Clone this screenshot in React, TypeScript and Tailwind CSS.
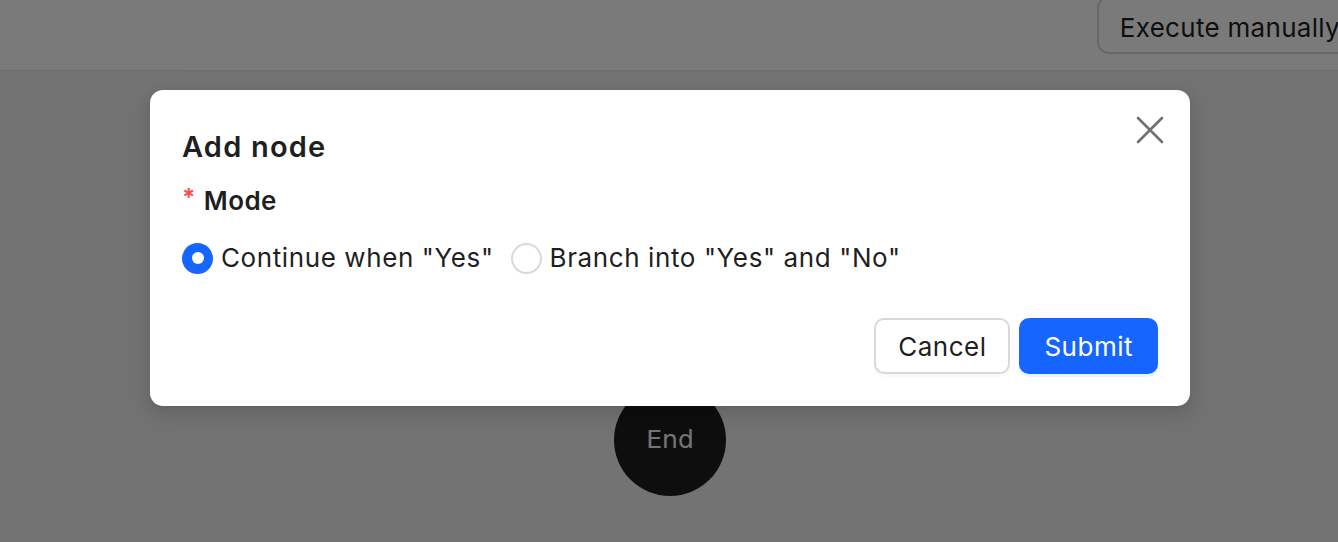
function Radio({ checked, label }: { checked: boolean; label: string }) {
  return (
    <label className="flex items-center gap-[8px] cursor-pointer">
      {checked ? (
        <span className="flex h-[31px] w-[31px] items-center justify-center rounded-full bg-[#1765ff]">
          <span className="h-[12px] w-[12px] rounded-full bg-white" />
        </span>
      ) : (
        <span className="h-[31px] w-[31px] rounded-full border-2 border-[#d9d9d9] bg-white" />
      )}
      <span className="text-[26px] leading-[38px] tracking-[0.6px] text-[#1f1f1f]">{label}</span>
    </label>
  );
}

export default function App() {
  return (
    <div className="relative h-[542px] w-full overflow-hidden bg-[#f0f0f0] font-['Inter',sans-serif]">
      {/* Page header */}
      <header className="flex h-[71px] items-start justify-end overflow-hidden border-b border-[#e6e6e6] bg-white">
        <button className="-mr-[28px] -mt-[4px] h-[58px] shrink-0 rounded-[12px] border-2 border-[#d9d9d9] bg-white pl-[21px] pr-[24px] pt-[4px] text-[26px] tracking-[0.3px] text-[#1f1f1f]">
          Execute manually
        </button>
      </header>

      {/* Flow canvas */}
      <main className="flex flex-col items-center pt-[313px] pl-[2px]">
        <div className="flex h-[112px] w-[112px] items-center justify-center rounded-full bg-[#1f1f1f] font-['DejaVu_Sans',sans-serif] text-[25px] text-[#f5f5f5]">
          End
        </div>
      </main>

      {/* Modal mask */}
      <div className="absolute inset-0 flex justify-center bg-black/[0.52] pl-[2px] pt-[90px]">
        <div className="relative h-[316px] w-[1040px] rounded-[13px] bg-white px-[32px] pt-[36px] shadow-[0_6px_16px_0_rgba(0,0,0,0.08),0_3px_6px_-4px_rgba(0,0,0,0.12),0_9px_28px_8px_rgba(0,0,0,0.05)]">
          <button className="absolute right-[26px] top-[26px] flex h-[28px] w-[28px] items-center justify-center">
            <svg width="28" height="28" viewBox="0 0 28 28" fill="none" stroke="#707070" strokeWidth="2.6" strokeLinecap="round">
              <path d="M2 2L26 26M26 2L2 26" />
            </svg>
          </button>

          <h2 className="h-[42px] text-[29px] font-semibold leading-[42px] tracking-[1.2px] text-[#1f1f1f]">
            Add node
          </h2>

          <div className="mt-[13px] flex h-[38px] items-center text-[26px] font-semibold tracking-[0.4px] text-[#1f1f1f]">
            <span className="-mt-[4px] mr-[8px] text-[24px] font-bold text-[#ff4d4f]">*</span>
            Mode
          </div>

          <div className="mt-[20px] flex items-center gap-[17px]">
            <Radio checked label={'Continue when "Yes"'} />
            <Radio checked={false} label={'Branch into "Yes" and "No"'} />
          </div>

          <div className="mt-[41px] flex justify-end gap-[9px]">
            <button className="h-[56px] rounded-[10px] border-2 border-[#d9d9d9] bg-white px-[22px] text-[26px] tracking-[0.5px] text-[#1f1f1f] shadow-[0_3px_0_rgba(0,0,0,0.02)]">
              Cancel
            </button>
            <button className="h-[56px] rounded-[10px] bg-[#1765ff] px-[25px] text-[26px] tracking-[0.5px] text-white shadow-[0_3px_0_rgba(5,145,255,0.1)]">
              Submit
            </button>
          </div>
        </div>
      </div>
    </div>
  );
}
